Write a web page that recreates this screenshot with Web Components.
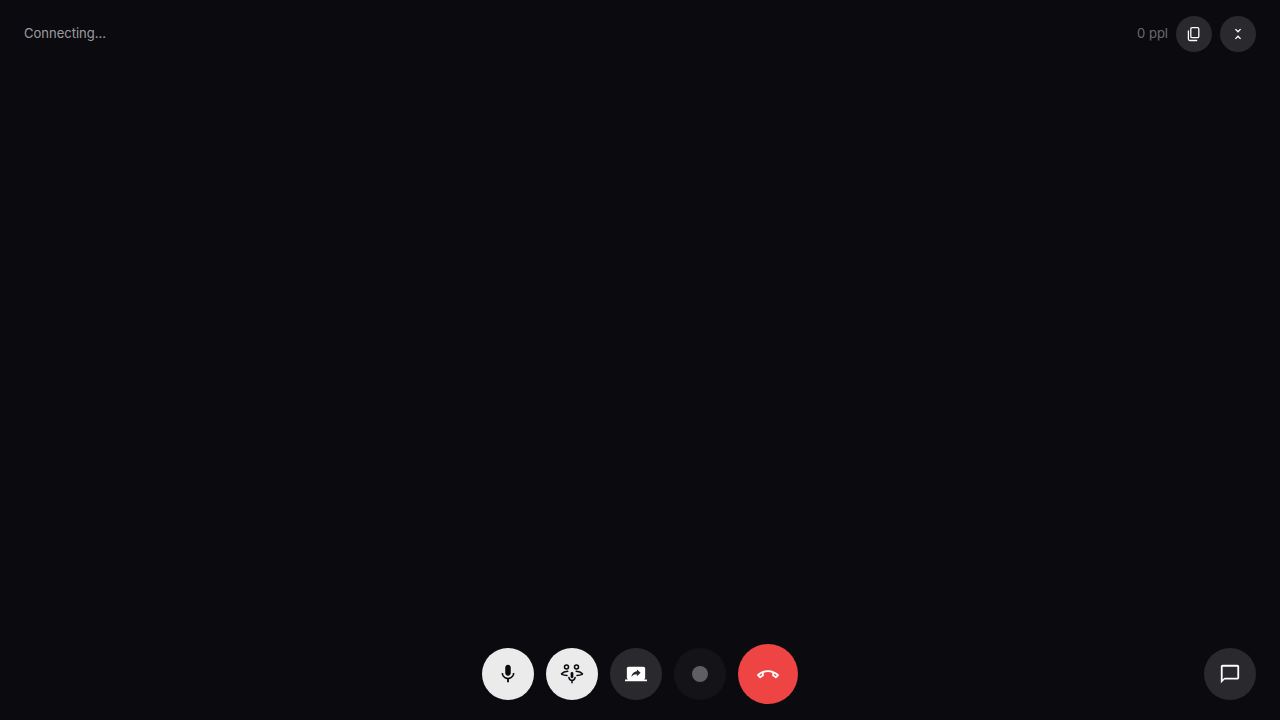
<!DOCTYPE html>
<html lang="en"><head><meta charset="utf-8"><title>Call</title>
<style>
html,body{margin:0;height:100%;background:#0a0a0f;overflow:hidden}
body{font-family:Inter,"Liberation Sans",sans-serif}
</style></head><body>
<call-screen>
  <call-header slot="header">
    <span slot="status">Connecting...</span>
    <span slot="count">0 ppl</span>
    <round-btn slot="actions" size="36" variant="dark" label="Copy link"><svg width="16" height="16" viewBox="0 0 16 16" fill="none" stroke="#fff" stroke-width="1.3"><rect x="4.800" y="1.700" width="8" height="10" rx="1.200"/><path d="M2.400 4.500V13a1.500 1.500 0 0 0 1.500 1.500h7.300"/></svg></round-btn>
    <round-btn slot="actions" size="36" variant="dark" label="Minimize"><svg width="16" height="16" viewBox="0 0 24 24" fill="#fff"><path d="M7.41 18.59L8.83 20 12 16.83 15.17 20l1.41-1.41L12 14l-4.59 4.59zm9.18-13.18L15.17 4 12 7.17 8.83 4 7.41 5.41 12 10l4.59-4.59z"/></svg></round-btn>
  </call-header>
  <call-controls slot="controls">
    <round-btn size="52" variant="light" label="Mute"><svg width="22" height="22" viewBox="0 0 24 24" fill="#0a0a0f"><path d="M12 14c1.66 0 2.99-1.34 2.99-3L15 5c0-1.66-1.34-3-3-3S9 3.34 9 5v6c0 1.66 1.34 3 3 3zm5.3-3c0 3-2.54 5.1-5.3 5.1S6.7 14 6.7 11H5c0 3.41 2.72 6.23 6 6.72V21h2v-3.28c3.28-.48 6-3.3 6-6.72h-1.7z"/></svg></round-btn>
    <round-btn size="52" variant="light" label="Noise"><svg width="24" height="24" viewBox="0 0 24 24" fill="none" stroke="#0a0a0f" stroke-width="1.500" stroke-linecap="round"><circle cx="6.500" cy="5" r="2"/><circle cx="16.500" cy="5" r="2"/><path d="M1.500 11.800C3 10.200 5 9.400 7.800 9.200M1.800 12.400c1.800.6 3.500.9 5.200 1.100M22.500 11.800C21 10.200 19 9.400 16.200 9.200M22.200 12.400c-1.800.6-3.500.9-5.200 1.100"/><rect x="10.600" y="10" width="2.800" height="6.200" rx="1.400" fill="#0a0a0f" stroke="none"/><path d="M8.900 15.500c.4 1.900 1.500 2.900 3.100 2.900s2.700-1 3.100-2.900M12 18.400v2.300"/></svg></round-btn>
    <round-btn size="52" variant="dark" label="Share screen"><svg width="22" height="22" viewBox="0 0 24 24" fill="#fff"><path d="M20 18c1.100 0 1.990-.9 1.990-2L22 6c0-1.110-.9-2-2-2H4c-1.110 0-2 .89-2 2v10c0 1.100.89 2 2 2H0v2h24v-2h-4zm-7-3.530v-2.190c-2.780 0-4.610.85-6 2.720.56-2.670 2.110-5.330 6-5.870V7l4 3.730-4 3.740z"/></svg></round-btn>
    <round-btn size="52" variant="dim" label="Record"><span class="dot" style="display:block;width:16px;height:16px;border-radius:50%;background:#5f5f62"></span></round-btn>
    <round-btn size="60" variant="red" label="Hang up"><svg width="22" height="22" viewBox="0 -0.800 24 24" fill="#fff"><path d="M18.590 10.520c1.050.51 2.040 1.150 2.960 1.910l-1.070 1.070c-.58-.47-1.210-.89-1.880-1.270v-1.710m-13.200 0v1.700c-.65.37-1.280.79-1.870 1.270l-1.070-1.070c.91-.75 1.900-1.380 2.940-1.900M12 7C7.460 7 3.340 8.780.29 11.670c-.18.18-.29.43-.29.71s.11.530.29.710l2.480 2.480c.18.18.43.29.71.29.27 0 .52-.11.7-.28.79-.74 1.690-1.360 2.660-1.850.33-.16.56-.5.56-.9v-3.100C8.850 9.250 10.400 9 12 9s3.150.25 4.600.72v3.100c0 .39.23.74.56.9.98.49 1.870 1.120 2.660 1.850.18.18.43.28.7.28.28 0 .53-.11.71-.29l2.480-2.480c.18-.18.29-.43.29-.71s-.11-.53-.29-.71C20.660 8.780 16.540 7 12 7z"/></svg></round-btn>
    <round-btn slot="aside" size="52" variant="dark" label="Chat"><svg width="22" height="22" viewBox="0 0 24 24" fill="#fff"><path d="M20 2H4c-1.100 0-2 .9-2 2v18l4-4h14c1.100 0 2-.9 2-2V4c0-1.100-.9-2-2-2zm0 14H6l-2 2V4h16v12z"/></svg></round-btn>
  </call-controls>
</call-screen>
<script>
function def(name,html,extra){customElements.define(name,class extends HTMLElement{
  constructor(){super();this.attachShadow({mode:'open'}).innerHTML=html;}
  connectedCallback(){extra&&extra(this);}
});}
def('call-screen',`<style>:host{display:flex;flex-direction:column;justify-content:space-between;height:100vh;box-sizing:border-box;font-family:Inter,"Liberation Sans",sans-serif}</style><slot name="header"></slot><slot name="controls"></slot>`);
def('call-header',`<style>:host{display:flex;align-items:center;justify-content:space-between;padding:16px 24px}
.status{font-size:13px;line-height:34px;height:36px;color:rgba(255,255,255,.6)}.right{display:flex;align-items:center;gap:8px}.count{font-size:13px;line-height:34px;height:36px;color:rgba(255,255,255,.4)}</style>
<div class="status"><slot name="status"></slot></div><div class="right"><div class="count"><slot name="count"></slot></div><slot name="actions"></slot></div>`);
def('call-controls',`<style>:host{display:grid;grid-template-columns:1fr auto 1fr;align-items:center;padding:0 24px 16px}
.main{grid-column:2;display:flex;align-items:center;gap:12px}.aside{grid-column:3;display:flex;justify-content:flex-end}</style>
<div class="main"><slot></slot></div><div class="aside"><slot name="aside"></slot></div>`);
const colors={dark:'#29292e',light:'#ebebec',dim:'#141418',red:'#ef4444'};
def('round-btn',`<style>:host{display:block;flex:none}button{all:unset;display:flex;align-items:center;justify-content:center;width:100%;height:100%;border-radius:50%;background:var(--bg)}svg{display:block}</style><button type="button"><slot></slot></button>`,el=>{
  const s=el.getAttribute('size')+'px';el.style.width=s;el.style.height=s;
  el.style.setProperty('--bg',colors[el.getAttribute('variant')]);
  el.shadowRoot.querySelector('button').setAttribute('aria-label',el.getAttribute('label')||'');
});
</script>
</body></html>
